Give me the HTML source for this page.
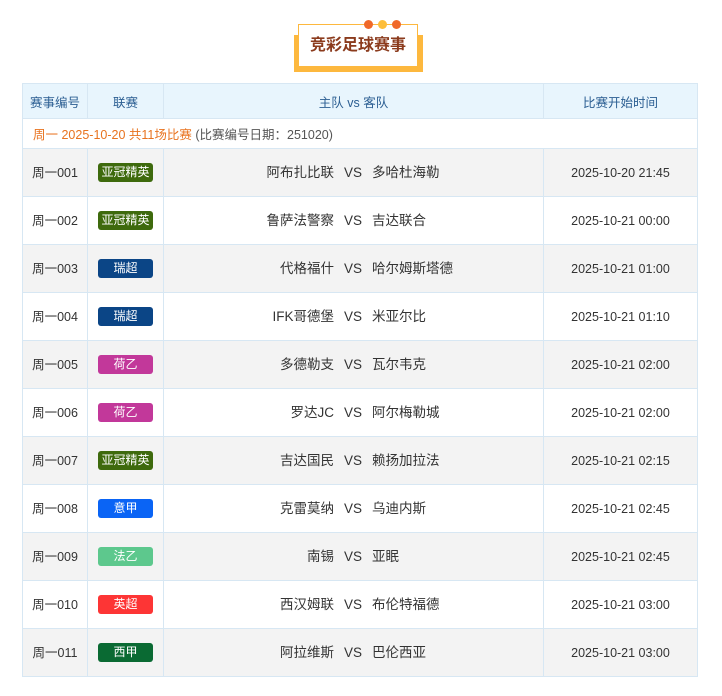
<!DOCTYPE html>
<html><head><meta charset="utf-8"><style>
*{margin:0;padding:0;box-sizing:border-box}
body{width:722px;height:696px;background:#fff;font-family:"Liberation Sans","Noto Sans CJK SC",sans-serif;position:relative;overflow:hidden}
.bk{position:absolute;left:294px;top:35px;width:129px;height:37px;background:#fdb83e}
.tb{position:absolute;left:298px;top:24px;width:120px;height:43px;background:#fff;border:1px solid #fdb83e;color:#8b3b1d;font-size:16px;font-weight:bold;text-align:center;line-height:42px}
.dot{position:absolute;top:20px;width:9px;height:9px;border-radius:50%}
table{position:absolute;left:22px;top:83px;width:676px;border-collapse:collapse;font-size:12.5px;color:#333;table-layout:fixed}
td,th{border:1px solid #d7e7f3;text-align:center;vertical-align:middle;padding:0}
th{background:#e8f5fd;color:#2b5e92;font-weight:normal;height:35px}
tr.r td{height:48px}
tr.g td{background:#f3f3f3}
.info td{height:30px;text-align:left;padding-left:10px;color:#e8731f}
.info span{color:#555}
.c{display:flex;align-items:center;justify-content:center;height:46px;line-height:16px}
.b{display:block;width:55px;height:19px;line-height:19px;border-radius:3px;color:#fff;font-size:12px}
.m{font-size:13.5px;color:#333}
.h{width:170px;text-align:right}
.vs{width:38px;text-align:center}
.a{flex:1;text-align:left}
</style></head><body>
<div class="bk"></div>
<div class="tb">竞彩足球赛事</div>
<div class="dot" style="left:364px;background:#f0692a"></div>
<div class="dot" style="left:378px;background:#fdbe3b"></div>
<div class="dot" style="left:392px;background:#f0692a"></div>
<table>
<colgroup><col style="width:65px"><col style="width:76px"><col style="width:380px"><col></colgroup>
<tr><th>赛事编号</th><th>联赛</th><th>主队 vs 客队</th><th>比赛开始时间</th></tr>
<tr class="info"><td colspan="4">周一 2025-10-20 共11场比赛 <span>(比赛编号日期：251020)</span></td></tr>
<tr class="r g"><td><div class="c">周一001</div></td><td><div class="c"><span class="b" style="background:#3e6a0d">亚冠精英</span></div></td><td><div class="c m"><span class="h">阿布扎比联</span><span class="vs">VS</span><span class="a">多哈杜海勒</span></div></td><td><div class="c">2025-10-20 21:45</div></td></tr>
<tr class="r"><td><div class="c">周一002</div></td><td><div class="c"><span class="b" style="background:#3e6a0d">亚冠精英</span></div></td><td><div class="c m"><span class="h">鲁萨法警察</span><span class="vs">VS</span><span class="a">吉达联合</span></div></td><td><div class="c">2025-10-21 00:00</div></td></tr>
<tr class="r g"><td><div class="c">周一003</div></td><td><div class="c"><span class="b" style="background:#0b4586">瑞超</span></div></td><td><div class="c m"><span class="h">代格福什</span><span class="vs">VS</span><span class="a">哈尔姆斯塔德</span></div></td><td><div class="c">2025-10-21 01:00</div></td></tr>
<tr class="r"><td><div class="c">周一004</div></td><td><div class="c"><span class="b" style="background:#0b4586">瑞超</span></div></td><td><div class="c m"><span class="h">IFK哥德堡</span><span class="vs">VS</span><span class="a">米亚尔比</span></div></td><td><div class="c">2025-10-21 01:10</div></td></tr>
<tr class="r g"><td><div class="c">周一005</div></td><td><div class="c"><span class="b" style="background:#c2389a">荷乙</span></div></td><td><div class="c m"><span class="h">多德勒支</span><span class="vs">VS</span><span class="a">瓦尔韦克</span></div></td><td><div class="c">2025-10-21 02:00</div></td></tr>
<tr class="r"><td><div class="c">周一006</div></td><td><div class="c"><span class="b" style="background:#c2389a">荷乙</span></div></td><td><div class="c m"><span class="h">罗达JC</span><span class="vs">VS</span><span class="a">阿尔梅勒城</span></div></td><td><div class="c">2025-10-21 02:00</div></td></tr>
<tr class="r g"><td><div class="c">周一007</div></td><td><div class="c"><span class="b" style="background:#3e6a0d">亚冠精英</span></div></td><td><div class="c m"><span class="h">吉达国民</span><span class="vs">VS</span><span class="a">赖扬加拉法</span></div></td><td><div class="c">2025-10-21 02:15</div></td></tr>
<tr class="r"><td><div class="c">周一008</div></td><td><div class="c"><span class="b" style="background:#0a64f5">意甲</span></div></td><td><div class="c m"><span class="h">克雷莫纳</span><span class="vs">VS</span><span class="a">乌迪内斯</span></div></td><td><div class="c">2025-10-21 02:45</div></td></tr>
<tr class="r g"><td><div class="c">周一009</div></td><td><div class="c"><span class="b" style="background:#5dc88d">法乙</span></div></td><td><div class="c m"><span class="h">南锡</span><span class="vs">VS</span><span class="a">亚眠</span></div></td><td><div class="c">2025-10-21 02:45</div></td></tr>
<tr class="r"><td><div class="c">周一010</div></td><td><div class="c"><span class="b" style="background:#fd3535">英超</span></div></td><td><div class="c m"><span class="h">西汉姆联</span><span class="vs">VS</span><span class="a">布伦特福德</span></div></td><td><div class="c">2025-10-21 03:00</div></td></tr>
<tr class="r g"><td><div class="c">周一011</div></td><td><div class="c"><span class="b" style="background:#0a6a33">西甲</span></div></td><td><div class="c m"><span class="h">阿拉维斯</span><span class="vs">VS</span><span class="a">巴伦西亚</span></div></td><td><div class="c">2025-10-21 03:00</div></td></tr>
</table>
</body></html>
